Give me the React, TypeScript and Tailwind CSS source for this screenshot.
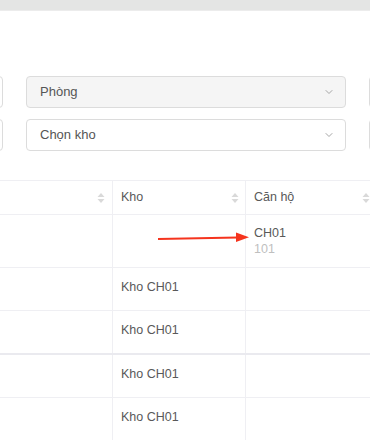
import { ChevronDown } from "lucide-react";

const rows = [
  { kho: "", canHo: "CH01", sub: "101" },
  { kho: "Kho CH01" },
  { kho: "Kho CH01" },
  { kho: "Kho CH01" },
  { kho: "Kho CH01" },
];

function SortIcon() {
  return (
    <svg width="8" height="12" viewBox="0 0 8 12" className="shrink-0">
      <path d="M4 1 L7.5 5 L0.5 5 Z" fill="#d9d9d9" />
      <path d="M4 11 L7.5 7 L0.5 7 Z" fill="#d9d9d9" />
    </svg>
  );
}

function Select({ label, disabled, className }: { label: string; disabled?: boolean; className?: string }) {
  return (
    <div
      className={`h-[32px] shrink-0 flex items-center justify-between pl-[13px] pr-[10px] rounded-[4px] border border-[#dcdcdc] ${
        disabled ? "bg-[#f5f5f5]" : "bg-white"
      } ${className ?? ""}`}
    >
      <span className="text-[13px] text-[#555]">{label}</span>
      <ChevronDown className="w-[12px] h-[12px] text-[#a6a6a6]" strokeWidth={2} />
    </div>
  );
}

export default function App() {
  return (
    <div
      className="w-[370px] h-[440px] overflow-hidden bg-white"
      style={{ fontFamily: '"Liberation Sans", Arial, sans-serif' }}
    >
      <div className="h-[11px] bg-[#e4e5e4] border-b border-[#ececec]" />

      <div className="mt-[65px] flex flex-col gap-[11px]">
        <div className="flex gap-[23px]">
          <Select label="" className="w-[100px] -ml-[97px]" />
          <Select label="Phòng" disabled className="w-[320px]" />
          <Select label="" className="w-[100px]" />
        </div>
        <div className="flex gap-[23px]">
          <Select label="" className="w-[100px] -ml-[97px]" />
          <Select label="Chọn kho" className="w-[320px]" />
          <Select label="" className="w-[100px]" />
        </div>
      </div>

      <div className="mt-[29px] border-t border-[#efeff3] text-[12.5px] text-[#595959]">
        <div className="flex h-[34px] border-b border-[#efeff3]">
          <div className="w-[113px] shrink-0 flex items-center justify-end pr-[7px] border-r border-[#efeff3]">
            <SortIcon />
          </div>
          <div className="w-[133px] shrink-0 flex items-center justify-between pl-[8px] pr-[6px] border-r border-[#efeff3]">
            <span>Kho</span>
            <SortIcon />
          </div>
          <div className="flex-1 flex items-center justify-between pl-[8px] pr-0">
            <span>Căn hộ</span>
            <SortIcon />
          </div>
        </div>

        {rows.map((r, i) => (
          <div
            key={i}
            className={`flex ${i === 0 ? "h-[53px]" : i === 2 ? "h-[44px]" : "h-[43px]"} ${
              i === 2 ? "border-b-2 border-[#eaeaef]" : "border-b border-[#efeff3]"
            }`}
          >
            <div className="w-[113px] shrink-0 border-r border-[#efeff3] relative">
              {i === 0 && (
                <svg width="100" height="20" viewBox="0 0 100 20" className="absolute left-[156px] top-[12px] z-10">
                  <line x1="2" y1="12" x2="82" y2="10.5" stroke="#f5341e" strokeWidth="2" />
                  <path d="M80 5.5 L93 10.2 L80 15 Z" fill="#f5341e" />
                </svg>
              )}
            </div>
            <div className="w-[133px] shrink-0 pl-[8px] pt-[10px] border-r border-[#efeff3]">
              {r.kho}
            </div>
            <div className="flex-1 pl-[8px] pt-[10px] leading-[16px]">
              {r.canHo && (
                <>
                  <div>{r.canHo}</div>
                  <div className="text-[#bfbfbf]">{r.sub}</div>
                </>
              )}
            </div>
          </div>
        ))}
      </div>
    </div>
  );
}
